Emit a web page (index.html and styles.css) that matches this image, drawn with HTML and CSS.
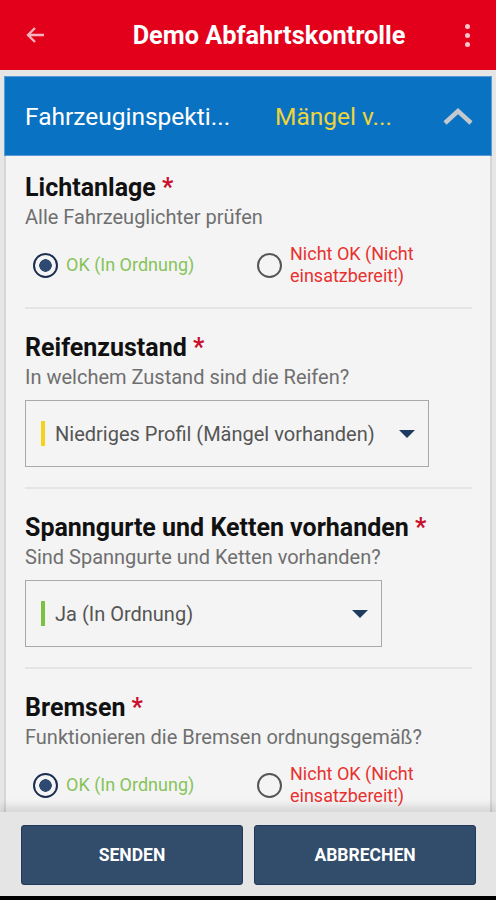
FILE: index.html
```html
<!DOCTYPE html>
<html lang="de">
<head>
    <meta charset="UTF-8">
    <meta name="viewport" content="width=device-width, initial-scale=1.0">
    <title>Demo Abfahrtskontrolle</title>
    <link rel="stylesheet" href="styles.css">
</head>
<body>
    <header class="appbar">
        <svg class="appbar-back" width="24" height="24" viewBox="0 0 24 24">
            <path d="M20 12H5M11 5l-7 7 7 7" fill="none" stroke="currentColor" stroke-width="2.4"/>
        </svg>
        <h1 class="appbar-title">Demo Abfahrtskontrolle</h1>
        <div class="appbar-menu"><span></span><span></span><span></span></div>
    </header>

    <main class="page">
        <div class="card">
            <div class="card-head">
                <span class="card-title">Fahrzeuginspekti...</span>
                <span class="card-status">Mängel v...</span>
                <svg class="card-toggle" width="32" height="20" viewBox="0 0 32 20">
                    <path d="M3 17L16 5l13 12" fill="none" stroke="currentColor" stroke-width="4.5"/>
                </svg>
            </div>
            <div class="card-body">
                <section class="field first">
                    <h2 class="field-label">Lichtanlage <span class="req">*</span></h2>
                    <p class="field-hint">Alle Fahrzeuglichter prüfen</p>
                    <div class="radios">
                        <label class="radio ok"><span class="dot checked"></span><span>OK (In Ordnung)</span></label>
                        <label class="radio bad"><span class="dot"></span><span>Nicht OK (Nicht<br>einsatzbereit!)</span></label>
                    </div>
                </section>
                <section class="field">
                    <h2 class="field-label">Reifenzustand <span class="req">*</span></h2>
                    <p class="field-hint">In welchem Zustand sind die Reifen?</p>
                    <div class="select wide">
                        <span class="bar yellow"></span>
                        <span class="select-text">Niedriges Profil (Mängel vorhanden)</span>
                        <span class="caret"></span>
                    </div>
                </section>
                <section class="field">
                    <h2 class="field-label">Spanngurte und Ketten vorhanden <span class="req">*</span></h2>
                    <p class="field-hint">Sind Spanngurte und Ketten vorhanden?</p>
                    <div class="select narrow">
                        <span class="bar green"></span>
                        <span class="select-text">Ja (In Ordnung)</span>
                        <span class="caret"></span>
                    </div>
                </section>
                <section class="field last">
                    <h2 class="field-label">Bremsen <span class="req">*</span></h2>
                    <p class="field-hint">Funktionieren die Bremsen ordnungsgemäß?</p>
                    <div class="radios">
                        <label class="radio ok"><span class="dot checked"></span><span>OK (In Ordnung)</span></label>
                        <label class="radio bad"><span class="dot"></span><span>Nicht OK (Nicht<br>einsatzbereit!)</span></label>
                    </div>
                </section>
            </div>
        </div>
    </main>

    <footer class="footer">
        <button class="btn">SENDEN</button>
        <button class="btn">ABBRECHEN</button>
    </footer>
    <div class="navbar"></div>
</body>
</html>
```

FILE: styles.css
```css
* {
    box-sizing: border-box;
}
body {
    margin: 0;
    height: 900px;
    display: flex;
    flex-direction: column;
    background-color: #e6e6e6;
    font-family: Roboto, "Noto Sans", sans-serif;
    overflow: hidden;
}
.appbar {
    height: 70px;
    flex: none;
    display: flex;
    align-items: center;
    background-color: #e2001a;
    color: white;
    padding: 0 24px 0 24px;
}
.appbar-back {
    color: #f7b3bb;
}
.appbar-title {
    flex: 1;
    margin: 0;
    text-align: center;
    font-size: 25.3px;
    font-weight: bold;
    padding-left: 28px;
}
.appbar-menu {
    display: flex;
    flex-direction: column;
    gap: 4px;
    width: 10px;
    align-items: center;
}
.appbar-menu span {
    width: 5px;
    height: 5px;
    border-radius: 50%;
    background-color: #f7c4ca;
}
.page {
    flex: 1;
    padding: 6px 4px 0;
    min-height: 0;
    display: flex;
}
.card {
    flex: 1;
    display: flex;
    flex-direction: column;
    overflow: hidden;
}
.card-head {
    height: 80px;
    flex: none;
    display: flex;
    align-items: center;
    background-color: #0a72c3;
    padding: 0 17px 0 20px;
    font-size: 24.5px;
    border: 1px solid #5b9ad4;
}
.card-title {
    color: white;
    width: 250px;
    white-space: nowrap;
}
.card-status {
    color: #ecd43c;
    flex: 1;
    white-space: nowrap;
}
.card-toggle {
    color: #c3c9cf;
}
.card-body {
    flex: 1;
    background-color: #f4f4f4;
    border-left: 2px solid #d6d6d6;
    border-right: 2px solid #d6d6d6;
    padding: 0 18px 0 19px;
    overflow: hidden;
}
.field {
    padding: 25px 0 20px;
    border-bottom: 2px solid #e4e4e4;
}
.field.first {
    padding-top: 18px;
    padding-bottom: 20px;
}
.field.last {
    border-bottom: none;
}
.field-label {
    margin: 0;
    font-size: 25px;
    line-height: 28px;
    font-weight: bold;
    color: #111;
}
.req {
    color: #c8102e;
}
.field-hint {
    margin: 2px 0 0;
    font-size: 20px;
    line-height: 26px;
    color: #6f6f6f;
}
.radios {
    display: flex;
    margin-top: 13px;
    padding-left: 8px;
}
.radio {
    display: flex;
    align-items: center;
    gap: 8px;
    font-size: 18px;
    line-height: 22px;
}
.radio.ok {
    width: 224px;
    color: #86c35a;
}
.radio.bad {
    color: #e8312f;
}
.dot {
    width: 25px;
    height: 25px;
    flex: none;
    border-radius: 50%;
    border: 2.5px solid #555;
}
.dot.checked {
    border-color: #1b2d50;
    background: radial-gradient(circle, #2e4a70 0 6px, transparent 6.5px);
}
.select {
    margin-top: 10px;
    height: 67px;
    display: flex;
    align-items: center;
    border: 1.5px solid #a9a9a9;
    padding: 0 13px 0 15px;
}
.select.wide {
    width: 404px;
}
.select.narrow {
    width: 357px;
}
.bar {
    width: 4px;
    height: 25px;
    margin-right: 10px;
}
.bar.yellow {
    background-color: #f6d21c;
}
.bar.green {
    background-color: #7cc242;
}
.select-text {
    flex: 1;
    font-size: 20px;
    color: #555;
    white-space: nowrap;
}
.caret {
    width: 0;
    height: 0;
    border-left: 8px solid transparent;
    border-right: 8px solid transparent;
    border-top: 8px solid #1d3a5f;
}
.footer {
    flex: none;
    height: 84px;
    display: grid;
    grid-template-columns: 1fr 1fr;
    gap: 11px;
    padding: 13px 20px 11px 21px;
    background-color: #e5e5e5;
    box-shadow: 0 -6px 8px rgba(0, 0, 0, 0.12);
    position: relative;
}
.btn {
    background-color: #324c6b;
    border: 1px solid #22395a;
    border-radius: 3px;
    color: white;
    font-family: Roboto, sans-serif;
    font-weight: bold;
    font-size: 17.5px;
}
.navbar {
    flex: none;
    height: 4px;
    background-color: #000;
}
```
